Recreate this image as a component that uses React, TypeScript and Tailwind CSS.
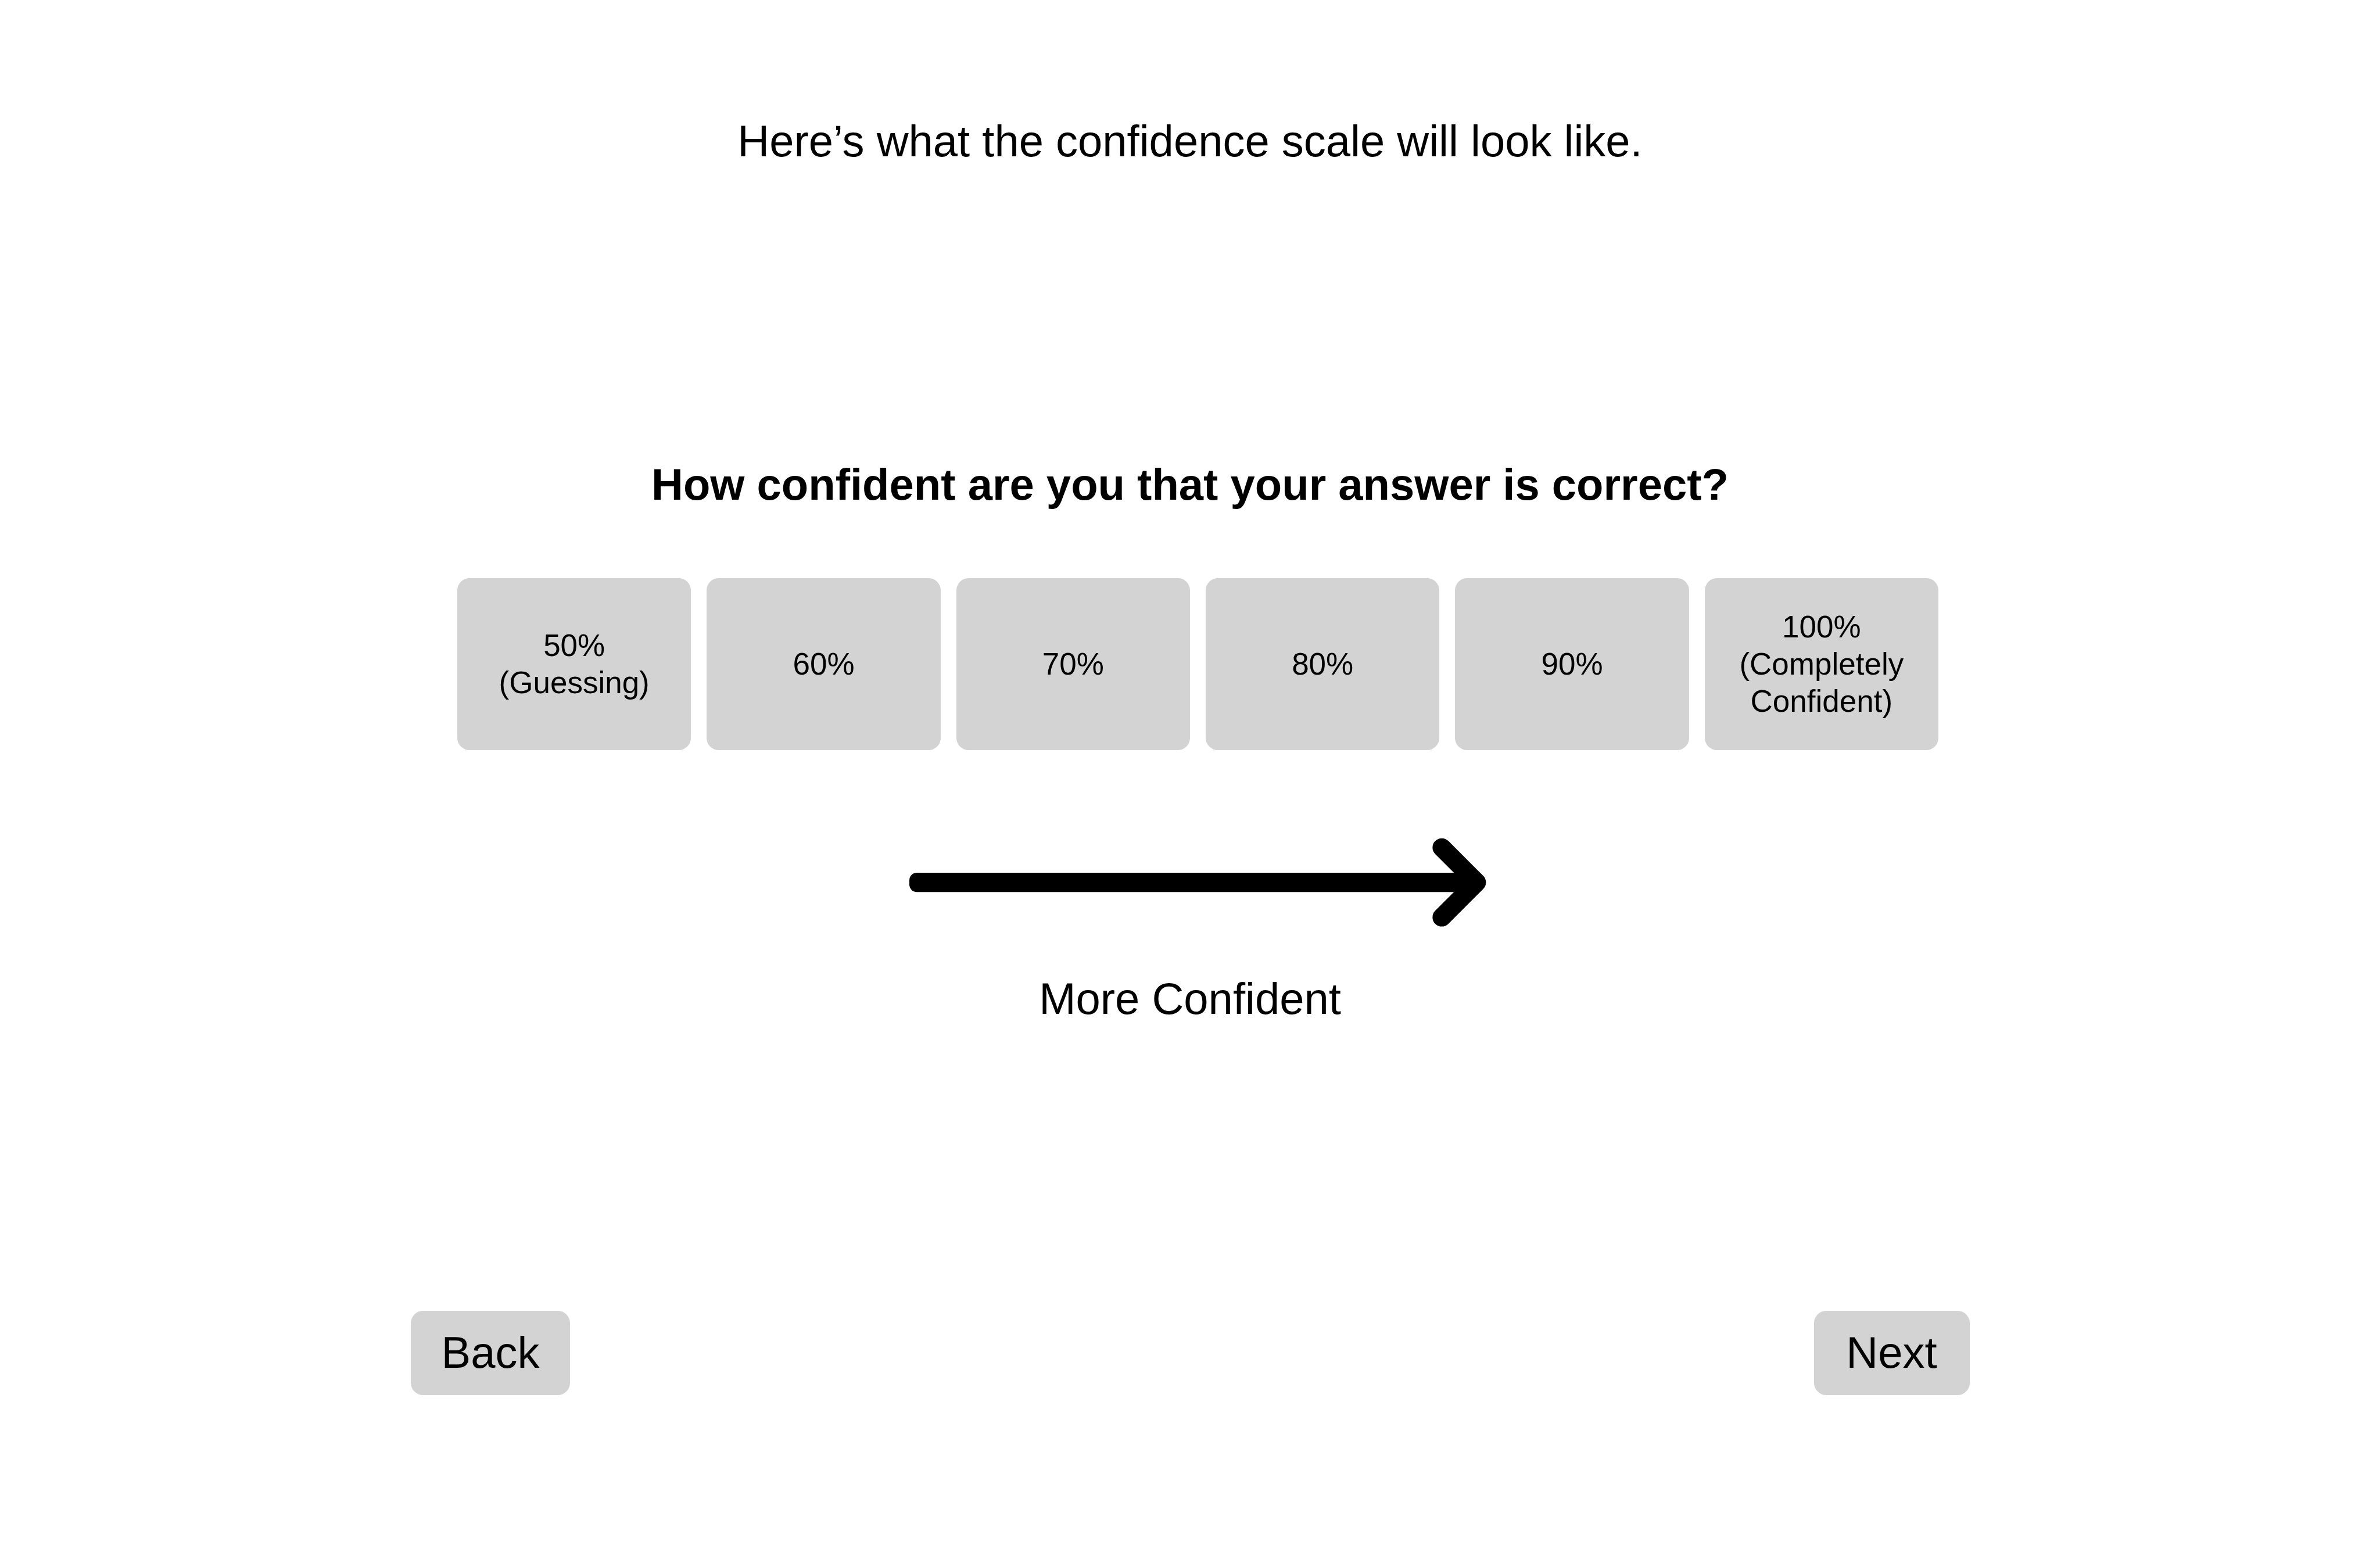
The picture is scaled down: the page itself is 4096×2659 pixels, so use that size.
const levels = [
  "50% (Guessing)",
  "60%",
  "70%",
  "80%",
  "90%",
  "100% (Completely Confident)",
];

function NavButton({ label }: { label: string }) {
  return (
    <button
      type="button"
      className="min-w-[268px] rounded-[21px] bg-[#d3d3d3] px-[53px] pt-[28px] pb-[29px] text-[76px] leading-[88px]"
    >
      {label}
    </button>
  );
}

export default function App() {
  return (
    <main className="flex min-h-screen w-full flex-col items-center bg-white pt-[199px] text-center font-['Liberation_Sans',Arial,sans-serif] text-black">
      <p className="text-[76px] leading-[88px]">
        Here’s what the confidence scale will look like.
      </p>

      <h1 className="mt-[503px] text-[76px] leading-[88px] font-bold">
        How confident are you that your answer is correct?
      </h1>

      <div className="mt-[117px] grid w-full max-w-[2576px] grid-cols-6 gap-[27px] pl-[27px]">
        {levels.map((level) => (
          <button
            key={level}
            type="button"
            className="flex min-h-[296px] items-center justify-center rounded-[21px] bg-[#d3d3d3] px-[53px] text-[53px] leading-[64px]"
          >
            {level}
          </button>
        ))}
      </div>

      <div className="mt-[151px] w-full max-w-[1020px] pl-[27px]">
        <svg
          viewBox="0 0 1555 240"
          className="block w-full"
          aria-hidden="true"
        >
          <rect x="0" y="94" width="1540" height="52" rx="20" />
          <path
            d="M1435 26L1529 120L1435 214"
            fill="none"
            stroke="currentColor"
            strokeWidth="50"
            strokeLinecap="round"
            strokeLinejoin="round"
          />
        </svg>
      </div>

      <p className="mt-[80px] text-[76px] leading-[88px]">More Confident</p>

      <nav className="mt-[493px] flex w-full max-w-[2683px] justify-between">
        <NavButton label="Back" />
        <NavButton label="Next" />
      </nav>
    </main>
  );
}
